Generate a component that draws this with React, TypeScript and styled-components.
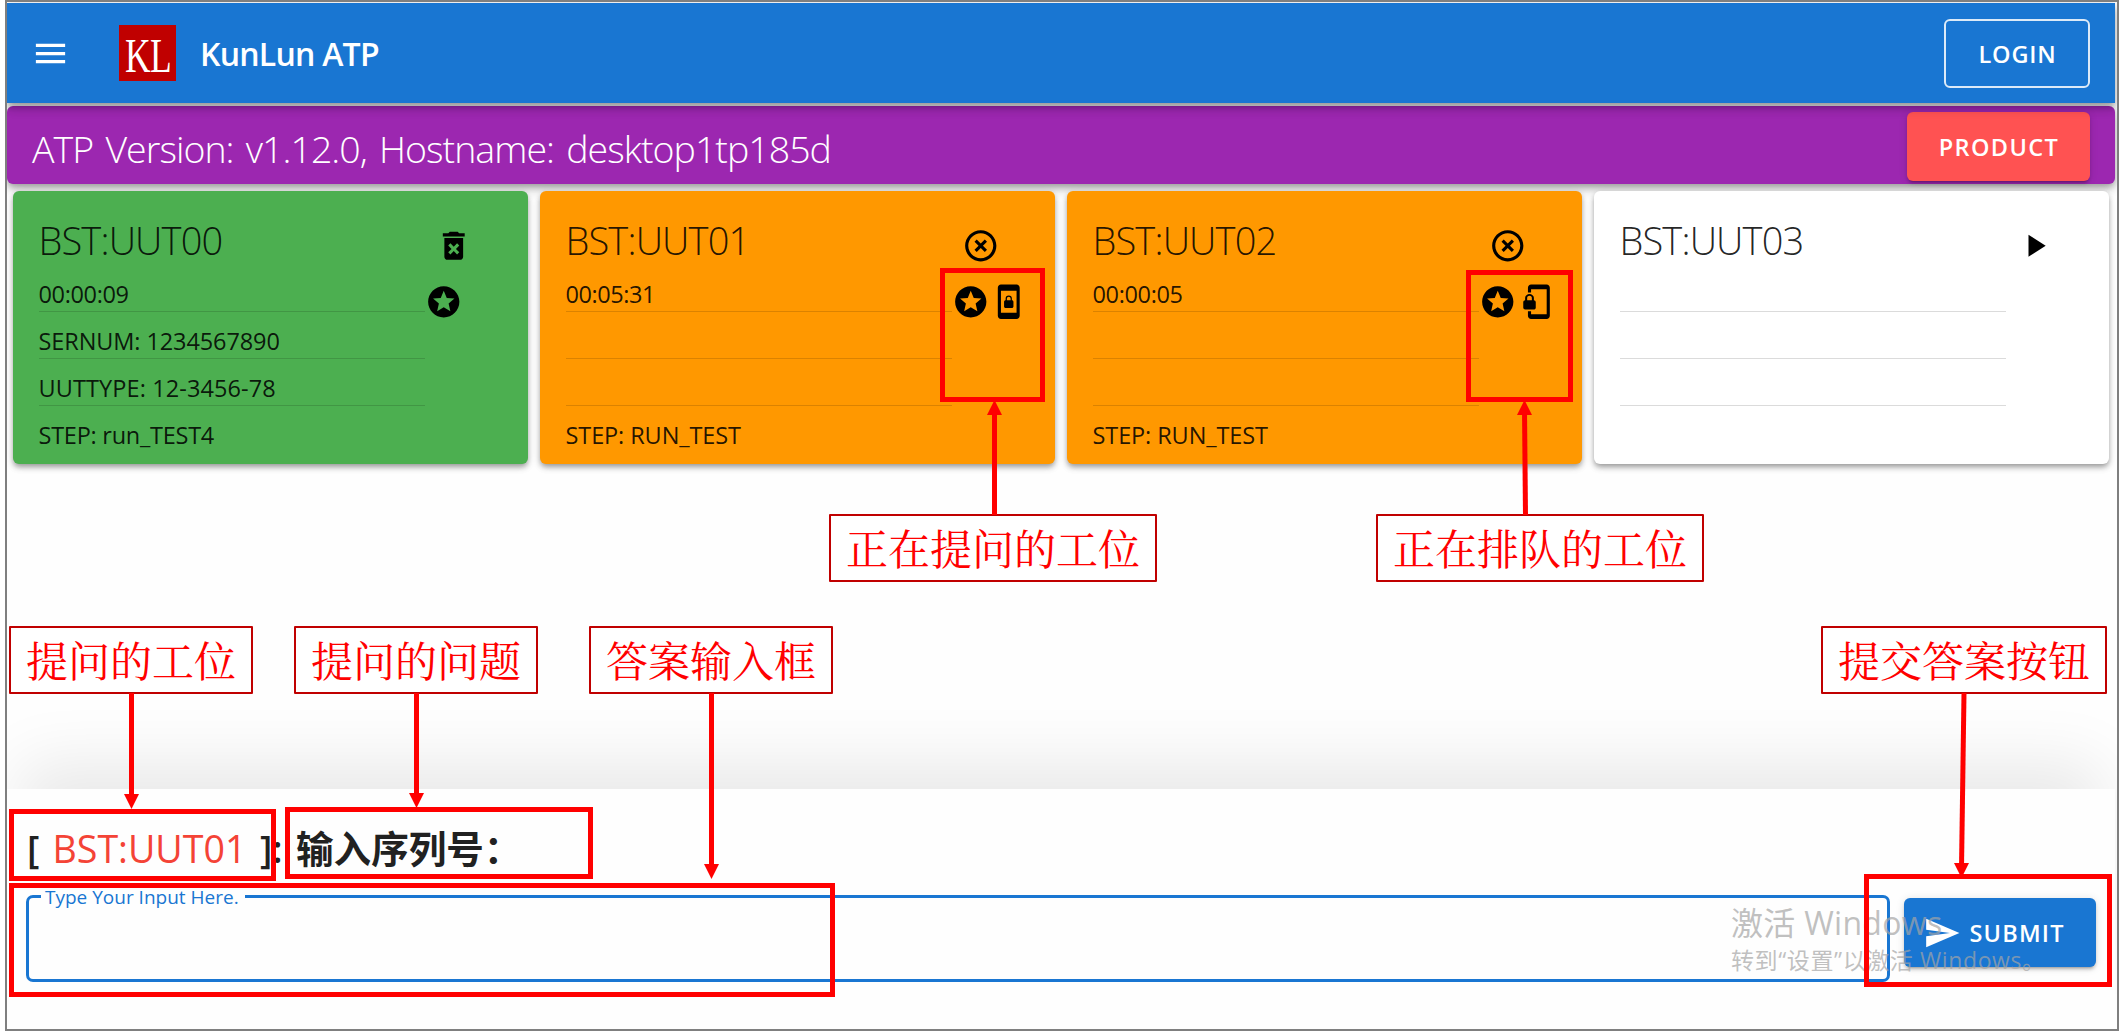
import React from "react";
import styled, { createGlobalStyle } from "styled-components";
import {
  MdMenu,
  MdDeleteForever,
  MdHighlightOff,
  MdPlayArrow,
  MdStars,
  MdScreenLockPortrait,
  MdPhonelinkLock,
  MdSend,
} from "react-icons/md";

const GlobalStyle = createGlobalStyle`
  * { box-sizing: border-box; }
  html, body { margin: 0; padding: 0; background: #fff; }
  body {
    width: 2119px;
    height: 1031px;
    overflow: hidden;
    font-family: "Open Sans", "Noto Sans CJK SC", sans-serif;
    color: rgba(0, 0, 0, 0.87);
  }
`;

const Frame = styled.div`
  position: relative;
  width: 2119px;
  height: 1031px;
  padding-left: 5px;
`;

const Page = styled.div`
  display: flex;
  flex-direction: column;
  height: 1031px;
  border: 2px solid #7f7f7f;
  padding: 1px 2px 0 0;
  background: #fefefe;
  overflow: hidden;
`;

const AppBar = styled.header`
  display: flex;
  align-items: center;
  flex: none;
  height: 100px;
  padding: 0 25px 0 24px;
  background: #1976d2;
  color: #fff;
  box-shadow: 0 3px 6px -1px rgba(0, 0, 0, 0.25), 0 6px 8px rgba(0, 0, 0, 0.14), 0 2px 15px rgba(0, 0, 0, 0.12);
  position: relative;
  z-index: 1;
  svg { flex: none; }
`;

const Logo = styled.div`
  display: flex;
  align-items: center;
  justify-content: center;
  width: 57px;
  height: 56px;
  margin: 0 24px 0 49px;
  background: #c00000;
  font: 48px "Liberation Serif", serif;
  letter-spacing: -1px;
  span { transform: translateY(2px) scaleX(0.74); }
`;

const Brand = styled.div`
  flex: 1;
  font-size: 32px;
  font-weight: 600;
  letter-spacing: -0.75px;
  white-space: nowrap;
`;

const buttonWidth = { outline: 146, red: 183, blue: 192 };
const buttonFill = { outline: "transparent", red: "#ff5252", blue: "#1976d2" };
const buttonTrack = { outline: 0.8, red: 1.4, blue: 1.2 };

const Button = styled.button<{ $kind: "outline" | "red" | "blue" }>`
  display: flex;
  align-items: center;
  justify-content: ${(p) => (p.$kind === "blue" ? "flex-start" : "center")};
  gap: 8.5px;
  flex: none;
  height: 69px;
  padding: ${(p) => (p.$kind === "blue" ? "0 0 0 19px" : "1px 0 0 1px")};
  width: ${(p) => buttonWidth[p.$kind]}px;
  border: ${(p) => (p.$kind === "outline" ? "2px solid rgba(255,255,255,0.85)" : "none")};
  border-radius: 6px;
  background: ${(p) => buttonFill[p.$kind]};
  color: #fff;
  font: 600 23.5px "Open Sans", sans-serif;
  letter-spacing: ${(p) => buttonTrack[p.$kind]}px;
  box-shadow: ${(p) =>
    p.$kind === "outline"
      ? "none"
      : "0 4px 2px -3px rgba(0,0,0,0.2), 0 3px 3px rgba(0,0,0,0.14), 0 1px 8px rgba(0,0,0,0.12)"};
`;

const VersionBar = styled.div`
  display: flex;
  align-items: center;
  justify-content: space-between;
  flex: none;
  height: 78px;
  margin-top: 3px;
  padding: 3px 25px 0 25px;
  border-radius: 6px;
  background: #9c27b0;
  color: #fff;
  box-shadow: 0 3px 6px -1px rgba(0, 0, 0, 0.25), 0 6px 8px rgba(0, 0, 0, 0.14), 0 2px 15px rgba(0, 0, 0, 0.12);
`;

const VersionText = styled.div`
  padding-top: 3px;
  font-size: 37.5px;
  font-weight: 300;
  letter-spacing: -0.96px;
  word-spacing: 3.4px;
  white-space: nowrap;
`;

const Cards = styled.div`
  display: grid;
  grid-template-columns: repeat(4, 514.5px);
  column-gap: 12.5px;
  padding: 6.5px 6px 0;
`;

const Card = styled.section<{ $bg: string }>`
  display: flex;
  height: 273px;
  padding-left: 25.5px;
  border-radius: 6px;
  background: ${(p) => p.$bg};
  box-shadow: 0 3px 5px -1px rgba(0, 0, 0, 0.25), 0 4px 6px rgba(0, 0, 0, 0.14), 0 2px 10px rgba(0, 0, 0, 0.1);
`;

const Info = styled.div`
  width: 386.5px;
  padding-top: 22.5px;
`;

const CardTitle = styled.h2`
  margin: 0;
  height: 52px;
  font-size: 38px;
  line-height: 54px;
  font-weight: 300;
  letter-spacing: -0.85px;
  white-space: nowrap;
`;

const Row = styled.div<{ $line: boolean; $track: number }>`
  height: 47px;
  padding-top: 12.5px;
  border-bottom: ${(p) => (p.$line ? "1.6px solid rgba(0,0,0,0.14)" : "none")};
  font-size: 23.5px;
  line-height: 33px;
  letter-spacing: ${(p) => p.$track}px;
  white-space: nowrap;
`;

const Actions = styled.div`
  display: flex;
  flex-direction: column;
  gap: 19px;
  padding-top: 36px;
  color: #000;
  svg { display: block; }
`;

const IconRow = styled.div<{ $indent?: boolean }>`
  display: flex;
  height: 37.5px;
  padding-left: ${(p) => (p.$indent ? 10 : 0)}px;
`;

const Spacer = styled.div`
  flex: 1;
`;

const Prompt = styled.section`
  flex: none;
  height: 240.5px;
  padding: 27px 0 0 19px;
  background: #fefefe;
  box-shadow: 0 -40px 60px -14px rgba(0, 0, 0, 0.085);
`;

const Question = styled.div`
  display: flex;
  height: 68px;
  padding-left: 1px;
  line-height: 65px;
  font-size: 37.6px;
  font-weight: 600;
  color: #212121;
  white-space: nowrap;
`;

const Piece = styled.span<{ $w: number; $red?: boolean }>`
  width: ${(p) => p.$w}px;
  font-weight: ${(p) => (p.$red ? 400 : "inherit")};
  color: ${(p) => (p.$red ? "#f44336" : "inherit")};
`;

const Form = styled.div`
  display: flex;
  align-items: flex-end;
  gap: 14.5px;
  height: 98px;
  & > button { margin-bottom: 14.5px; }
`;

const Field = styled.fieldset`
  width: 1863.5px;
  height: 98px;
  margin: 0;
  padding: 0 0 0 12px;
  border: 3px solid #1976d2;
  border-radius: 7px;
`;

const Legend = styled.legend`
  width: 204px;
  height: 25px;
  padding: 0 4px;
  font-size: 19px;
  line-height: 26px;
  color: #1976d2;
  white-space: nowrap;
`;

const Overlay = styled.div`
  position: absolute;
  inset: 0;
  z-index: 5;
  pointer-events: none;
`;

const Mark = styled.div<{ $x: number; $y: number; $w: number; $h: number }>`
  position: absolute;
  left: ${(p) => p.$x}px;
  top: ${(p) => p.$y}px;
  width: ${(p) => p.$w}px;
  height: ${(p) => p.$h}px;
  border: 5px solid #f00;
`;

const Callout = styled.div<{ $x: number; $y: number }>`
  position: absolute;
  left: ${(p) => p.$x}px;
  top: ${(p) => p.$y}px;
  height: 68px;
  padding: 0 15px;
  border: 2px solid #c00000;
  border-radius: 1px;
  background: #fff;
  color: #f00;
  font: 400 42px/62px "Noto Serif CJK SC", "SimSun", "Noto Sans CJK SC", serif;
  white-space: nowrap;
`;

const Arrows = styled.svg`
  position: absolute;
  inset: 0;
`;

const Watermark = styled.div`
  position: absolute;
  left: 1731px;
  top: 902px;
  color: rgba(165, 165, 165, 0.7);
  white-space: nowrap;
`;

const WatermarkTitle = styled.div`
  font: 400 32px/42px "Open Sans", "Noto Sans CJK SC", sans-serif;
  letter-spacing: 0.3px;
`;

const WatermarkText = styled.div`
  font: 400 23px/32px "Open Sans", "Noto Sans CJK SC", sans-serif;
  letter-spacing: 0.6px;
`;

type Line = { text: string; track: number };
type Unit = { name: string; bg: string; rows: Line[]; action: React.ReactNode; status: React.ReactNode };
const S = 37.5;
const blank: Line = { text: "", track: 0 };

const units: Unit[] = [
  {
    name: "BST:UUT00",
    bg: "#4caf50",
    rows: [
      { text: "00:00:09", track: -0.35 },
      { text: "SERNUM: 1234567890", track: -0.1 },
      { text: "UUTTYPE: 12-3456-78", track: 0.1 },
      { text: "STEP: run_TEST4", track: -0.25 },
    ],
    action: <MdDeleteForever size={S} />,
    status: <MdStars size={S} />,
  },
  {
    name: "BST:UUT01",
    bg: "#ff9800",
    rows: [{ text: "00:05:31", track: -0.45 }, blank, blank, { text: "STEP: RUN_TEST", track: -0.1 }],
    action: <MdHighlightOff size={S} />,
    status: <><MdStars size={S} /><MdScreenLockPortrait size={S} /></>,
  },
  {
    name: "BST:UUT02",
    bg: "#ff9800",
    rows: [{ text: "00:00:05", track: -0.35 }, blank, blank, { text: "STEP: RUN_TEST", track: -0.1 }],
    action: <MdHighlightOff size={S} />,
    status: <><MdStars size={S} /><MdPhonelinkLock size={S} /></>,
  },
  { name: "BST:UUT03", bg: "#fff", rows: [blank, blank, blank, blank], action: <MdPlayArrow size={S} />, status: null },
];

const marks = [
  [940, 268, 105, 134],
  [1466, 270, 107, 132],
  [9, 809, 267, 72],
  [285, 807, 308, 72],
  [9, 883, 826, 114],
  [1864, 874, 248, 113],
];

const callouts: [number, number, string][] = [
  [829, 514, "正在提问的工位"],
  [1376, 514, "正在排队的工位"],
  [9, 626, "提问的工位"],
  [294, 626, "提问的问题"],
  [589, 626, "答案输入框"],
  [1821, 626, "提交答案按钮"],
];

// Each arrow runs from (x1, y1) to its tip at (x2, y2).
const arrows = [
  [994.5, 515, 994.5, 400],
  [1525.5, 515, 1524.5, 400],
  [131.5, 693, 131.5, 809],
  [416.5, 693, 416.5, 808],
  [711.5, 693, 711.5, 879],
  [1964, 693, 1961.5, 878],
];

export default function App() {
  return (
    <>
      <GlobalStyle />
      <Frame>
        <Page>
          <AppBar>
            <MdMenu size={39} />
            <Logo><span>KL</span></Logo>
            <Brand>KunLun ATP</Brand>
            <Button $kind="outline">LOGIN</Button>
          </AppBar>
          <VersionBar>
            <VersionText>ATP Version: v1.12.0, Hostname: desktop1tp185d</VersionText>
            <Button $kind="red">PRODUCT</Button>
          </VersionBar>
          <Cards>
            {units.map((u) => (
              <Card key={u.name} $bg={u.bg}>
                <Info>
                  <CardTitle>{u.name}</CardTitle>
                  {u.rows.map((r, i) => (
                    <Row key={i} $line={i < 3} $track={r.track}>{r.text}</Row>
                  ))}
                </Info>
                <Actions>
                  <IconRow $indent>{u.action}</IconRow>
                  <IconRow>{u.status}</IconRow>
                </Actions>
              </Card>
            ))}
          </Cards>
          <Spacer />
          <Prompt>
            <Question>
              <Piece $w={25.5}>[</Piece>
              <Piece $w={207.5} $red>BST:UUT01</Piece>
              <Piece $w={36}>]:</Piece>
              <Piece $w={240}>输入序列号：</Piece>
            </Question>
            <Form>
              <Field><Legend>Type Your Input Here.</Legend></Field>
              <Button $kind="blue"><MdSend size={38} />SUBMIT</Button>
            </Form>
          </Prompt>
        </Page>
        <Overlay>
          <Watermark>
            <WatermarkTitle>激活 Windows</WatermarkTitle>
            <WatermarkText>转到“设置”以激活 Windows。</WatermarkText>
          </Watermark>
          {marks.map(([x, y, w, h]) => (
            <Mark key={`${x}-${y}`} $x={x} $y={y} $w={w} $h={h} />
          ))}
          {callouts.map(([x, y, t]) => (
            <Callout key={t} $x={x} $y={y}>{t}</Callout>
          ))}
          <Arrows width="2119" height="1031">
            {arrows.map(([x1, y1, x2, y2]) => {
              const d = y2 > y1 ? -1 : 1;
              return (
                <g key={x1} fill="#f00" stroke="#f00">
                  <line x1={x1} y1={y1} x2={x2} y2={y2 + d * 10} strokeWidth="5" />
                  <path stroke="none" d={`M${x2} ${y2}l-7.5 ${d * 15}h15z`} />
                </g>
              );
            })}
          </Arrows>
        </Overlay>
      </Frame>
    </>
  );
}
